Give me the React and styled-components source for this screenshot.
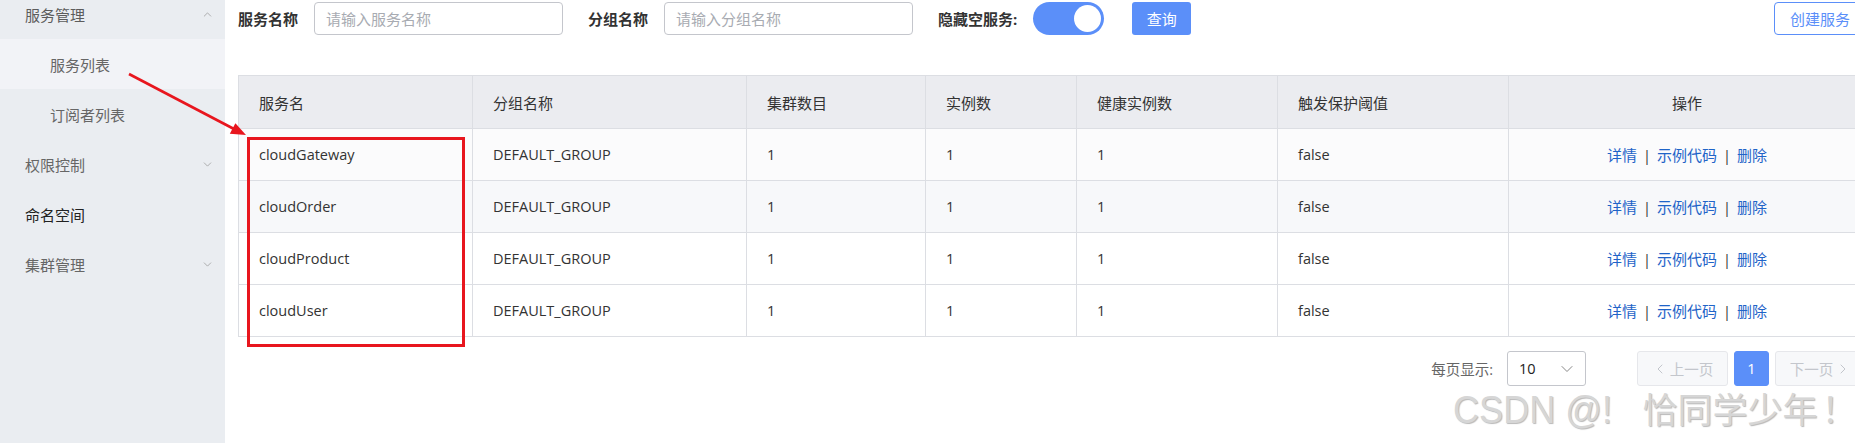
import { createGlobalStyle } from 'styled-components';
import styled from 'styled-components';
import { ChevronDown, ChevronUp, ChevronLeft, ChevronRight } from 'lucide-react';

const GlobalStyle = createGlobalStyle`
  html, body {
    margin: 0;
    padding: 0;
    overflow: hidden;
    background: #fff;
  }
  body {
    font-family: "Open Sans", "Noto Sans CJK SC", sans-serif;
    font-size: 14.5px;
    color: #333;
  }
`;

const menu = [
  { label: '服务管理', level: 0, arrow: 'up', tone: '#5c5c5c' },
  { label: '服务列表', level: 1, active: true, tone: '#666' },
  { label: '订阅者列表', level: 1, tone: '#666' },
  { label: '权限控制', level: 0, arrow: 'down', tone: '#666' },
  { label: '命名空间', level: 0, tone: '#222' },
  { label: '集群管理', level: 0, arrow: 'down', tone: '#666' },
];

const columns = [
  { title: '服务名', width: 234 },
  { title: '分组名称', width: 274 },
  { title: '集群数目', width: 179 },
  { title: '实例数', width: 151 },
  { title: '健康实例数', width: 201 },
  { title: '触发保护阈值', width: 231 },
  { title: '操作', center: true },
];

const services = ['cloudGateway', 'cloudOrder', 'cloudProduct', 'cloudUser'];
const rowTones = ['#fbfbfc', '#f7f8fa', '#fff', '#fff'];

export default function App() {
  return (
    <Page>
      <GlobalStyle />
      <Sidebar>
        <Menu>
          {menu.map((item) => (
            <MenuItem key={item.label} level={item.level} active={item.active} tone={item.tone}>
              <span>{item.label}</span>
              {item.arrow === 'up' && <ChevronUp size={13} strokeWidth={1.4} color="#999" />}
              {item.arrow === 'down' && <ChevronDown size={13} strokeWidth={1.4} color="#999" />}
            </MenuItem>
          ))}
        </Menu>
      </Sidebar>

      <Main>
        <Toolbar>
          <FieldLabel>服务名称</FieldLabel>
          <TextInput placeholder="请输入服务名称" />
          <FieldLabel>分组名称</FieldLabel>
          <TextInput placeholder="请输入分组名称" />
          <FieldLabel>隐藏空服务:</FieldLabel>
          <Toggle>
            <Knob />
          </Toggle>
          <PrimaryButton>查询</PrimaryButton>
          <OutlineButton>创建服务</OutlineButton>
        </Toolbar>

        <Table>
          <colgroup>
            {columns.map((c) => (
              <col key={c.title} style={c.width ? { width: c.width } : undefined} />
            ))}
          </colgroup>
          <thead>
            <tr>
              {columns.map((c) => (
                <Th key={c.title} center={c.center}>{c.title}</Th>
              ))}
            </tr>
          </thead>
          <tbody>
            {services.map((name, i) => (
              <Tr key={name} tone={rowTones[i]}>
                <Td>{name}</Td>
                <Td>DEFAULT_GROUP</Td>
                <Td>1</Td>
                <Td>1</Td>
                <Td>1</Td>
                <Td>false</Td>
                <Td center>
                  <Link>详情</Link>
                  <Sep>|</Sep>
                  <Link>示例代码</Link>
                  <Sep>|</Sep>
                  <Link>删除</Link>
                </Td>
              </Tr>
            ))}
          </tbody>
        </Table>

        <Pager>
          <PagerLabel>每页显示:</PagerLabel>
          <SizeSelect>
            <span>10</span>
            <ChevronDown size={20} strokeWidth={1.2} color="#888" />
          </SizeSelect>
          <PageButton wide>
            <ChevronLeft size={16} strokeWidth={1.5} />
            上一页
          </PageButton>
          <PageButton current>1</PageButton>
          <PageButton wide>
            下一页
            <ChevronRight size={16} strokeWidth={1.5} />
          </PageButton>
        </Pager>
      </Main>

      <Annotation viewBox="0 0 1870 443">
        <line x1="129" y1="74" x2="234" y2="129" stroke="#e8161e" strokeWidth="2.6" />
        <polygon points="246,135 229.8,133.8 235.4,123.2" fill="#e8161e" />
        <rect x="248.5" y="138.5" width="215" height="207" fill="none" stroke="#e8161e" strokeWidth="3" />
      </Annotation>

      <Watermark>
        <Latin>CSDN @!</Latin>恰同学少年<Bang>！</Bang>
      </Watermark>
    </Page>
  );
}

const Page = styled.div`
  position: relative;
  display: flex;
  width: 1870px;
  height: 443px;
`;

const Sidebar = styled.aside`
  width: 225px;
  flex-shrink: 0;
  background: #eaedf1;
  overflow: hidden;
`;

const Menu = styled.ul`
  list-style: none;
  margin: -11px 0 0;
  padding: 0;
`;

const MenuItem = styled.li`
  height: 50px;
  display: flex;
  align-items: center;
  justify-content: space-between;
  padding: 0 11px 0 ${({ level }) => (level ? '50px' : '25px')};
  background: ${({ active }) => (active ? '#f2f3f7' : 'transparent')};
  color: ${({ tone }) => tone};
  font-size: 15px;
`;

const Main = styled.main`
  flex: 1;
  padding: 2px 4px 0 13px;
  min-width: 0;
`;

const Toolbar = styled.div`
  display: flex;
  align-items: center;
  height: 33px;
`;

const FieldLabel = styled.span`
  font-size: 15px;
  font-weight: 700;
  color: #333;
  margin: 0 16px 0 0;
`;

const TextInput = styled.input`
  width: 249px;
  height: 33px;
  box-sizing: border-box;
  border: 1px solid #c4c6cc;
  border-radius: 4px;
  padding: 0 11px;
  font-family: inherit;
  font-size: 15px;
  color: #333;
  outline: none;
  margin-right: 25px;
  &::placeholder {
    color: #a8abb2;
  }
`;

const Toggle = styled.div`
  width: 71px;
  height: 33px;
  border-radius: 17px;
  background: #5b8ff9;
  display: flex;
  align-items: center;
  justify-content: flex-end;
  padding: 0 3px;
  box-sizing: border-box;
  margin-right: 28px;
`;

const Knob = styled.div`
  width: 27px;
  height: 27px;
  border-radius: 50%;
  background: #fff;
`;

const PrimaryButton = styled.button`
  width: 59px;
  height: 33px;
  border: none;
  border-radius: 3px;
  background: #5b8ff9;
  color: #fff;
  font-family: inherit;
  font-size: 15px;
`;

const OutlineButton = styled.button`
  margin-left: auto;
  width: 92px;
  height: 33px;
  border: 1px solid #5b8ff9;
  border-radius: 4px;
  background: #fff;
  color: #5b8ff9;
  font-family: inherit;
  font-size: 15px;
  padding: 0;
`;

const Table = styled.table`
  margin-top: 40px;
  width: 100%;
  table-layout: fixed;
  border-collapse: collapse;
  border: 1px solid #dcdee3;
`;

const Th = styled.th`
  height: 52px;
  padding: 0 0 0 ${({ center }) => (center ? '0' : '20px')};
  text-align: ${({ center }) => (center ? 'center' : 'left')};
  font-weight: 400;
  font-size: 15px;
  color: #333;
  background: #ebecf0;
  border: 1px solid #dcdee3;
`;

const Tr = styled.tr`
  background: ${({ tone }) => tone};
`;

const Td = styled.td`
  height: 51px;
  padding: 0 0 0 ${({ center }) => (center ? '0' : '20px')};
  text-align: ${({ center }) => (center ? 'center' : 'left')};
  border: 1px solid #dcdee3;
  color: #333;
  white-space: nowrap;
`;

const Link = styled.a`
  color: #1f64c8;
  font-size: 15px;
  cursor: pointer;
`;

const Sep = styled.span`
  margin: 0 6px;
  color: #333;
`;

const Pager = styled.div`
  display: flex;
  align-items: center;
  justify-content: flex-end;
  margin-top: 14px;
  gap: 6px;
`;

const PagerLabel = styled.span`
  color: #666;
  font-size: 14.5px;
  margin-right: 8px;
`;

const SizeSelect = styled.div`
  width: 79px;
  height: 35px;
  box-sizing: border-box;
  border: 1px solid #c4c6cc;
  border-radius: 3px;
  display: flex;
  align-items: center;
  justify-content: space-between;
  padding: 0 8px 0 11px;
  color: #222;
  margin-right: 45px;
`;

const PageButton = styled.div`
  height: 35px;
  width: ${({ wide }) => (wide ? '91px' : '35px')};
  box-sizing: border-box;
  display: flex;
  align-items: center;
  justify-content: center;
  gap: 2px;
  border-radius: 3px;
  border: 1px solid ${({ current }) => (current ? '#5b8ff9' : '#e6e7eb')};
  background: ${({ current }) => (current ? '#5b8ff9' : '#f7f8fa')};
  color: ${({ current }) => (current ? '#fff' : '#c3c6cc')};
  font-size: 14.5px;
`;

const Annotation = styled.svg`
  position: absolute;
  left: 0;
  top: 0;
  width: 1870px;
  height: 443px;
  pointer-events: none;
`;

const Watermark = styled.div`
  position: absolute;
  left: 1453px;
  top: 386px;
  font-family: "Noto Sans CJK SC", sans-serif;
  font-size: 35px;
  line-height: 44px;
  color: #d6d6d6;
  text-shadow: 1px 1px 1px rgba(0, 0, 0, 0.28);
  white-space: nowrap;
  pointer-events: none;
`;

const Latin = styled.span`
  font-family: "Liberation Sans", sans-serif;
  font-size: 38px;
  display: inline-block;
  transform: scaleX(0.95);
  transform-origin: left center;
  margin-right: 22px;
`;

const Bang = styled.span`
  margin-left: 4px;
`;
